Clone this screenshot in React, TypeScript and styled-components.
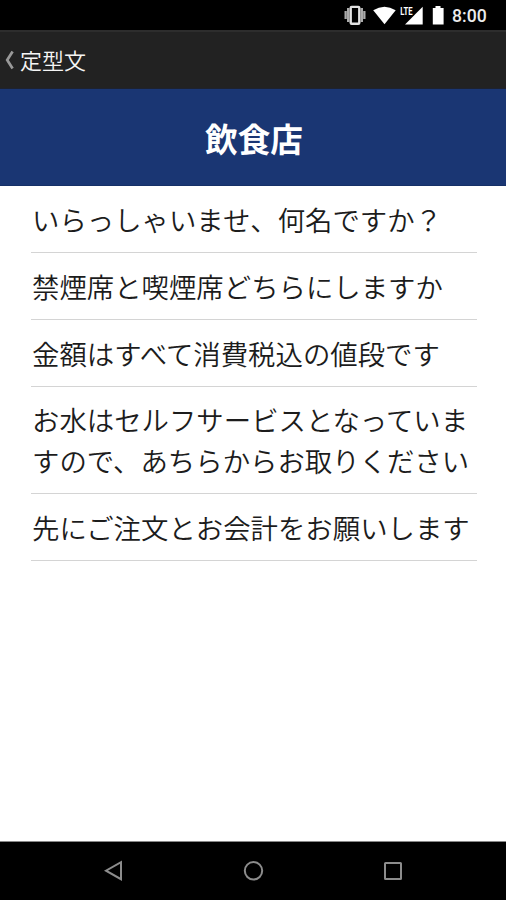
import React from 'react';
import styled, { createGlobalStyle } from 'styled-components';

const GlobalStyle = createGlobalStyle`
  * { box-sizing: border-box; }
  body { margin: 0; background: #fff; }
`;

const Screen = styled.div`
  display: flex;
  flex-direction: column;
  width: 506px;
  height: 900px;
  overflow: hidden;
  background: #fff;
  color: #1c1c1c;
  font-family: 'Noto Sans CJK JP', sans-serif;
`;

const StatusBar = styled.div`
  display: flex;
  flex: none;
  align-items: center;
  justify-content: flex-end;
  height: 30px;
  padding-right: 18px;
  background: #000;
`;

const StatusIcons = styled.svg`
  display: block;
  width: 108px;
  height: 30px;
`;

const Clock = styled.span`
  width: 36px;
  margin-top: 2px;
  color: #ececec;
  font: 500 17.6px/24px Roboto, sans-serif;
  text-align: left;
  white-space: nowrap;
`;

const NavBar = styled.header`
  display: flex;
  flex: none;
  align-items: center;
  height: 59px;
  padding-left: 5px;
  border-top: 2px solid #2d2d2d;
  border-bottom: 1px solid #1d2230;
  background: #222;
`;

const BackIcon = styled.svg`
  width: 9px;
  height: 20px;
  margin-right: 6px;
`;

const NavTitle = styled.span`
  margin-top: -3px;
  color: #f5f5f5;
  font-size: 22px;
  font-weight: 350;
  line-height: 32px;
`;

const Heading = styled.h1`
  flex: none;
  height: 97px;
  margin: 0;
  padding-left: 2px;
  border-bottom: 1px solid #163067;
  background: #1a3673;
  color: #fff;
  font-size: 32.7px;
  font-weight: 700;
  line-height: 98px;
  text-align: center;
`;

const PhraseList = styled.ul`
  flex: 1;
  margin: 0;
  padding: 0 29px 0 31px;
  list-style: none;
`;

const Phrase = styled.li`
  padding: 12.8px 0 12.6px 1px;
  border-bottom: 1px solid #d4d4d4;
  font-family: 'Noto Sans CJK JP DemiLight', 'Noto Sans CJK JP', sans-serif;
  font-size: 27.4px;
  font-weight: 350;
  line-height: 40.5px;
  white-space: pre-line;
`;

const SystemBar = styled.nav`
  display: flex;
  flex: none;
  align-items: center;
  justify-content: space-between;
  height: 59px;
  padding: 0 102px;
  border-top: 1px solid #888;
  background: #000;
`;

const SystemIcon = styled.svg`
  width: 22px;
  height: 22px;
  fill: none;
  stroke: #8c8c8c;
  stroke-width: 2;
`;

const phrases = [
  'いらっしゃいませ、何名ですか？',
  '禁煙席と喫煙席どちらにしますか',
  '金額はすべて消費税込の値段です',
  'お水はセルフサービスとなっていま\nすので、あちらからお取りください',
  '先にご注文とお会計をお願いします',
];

export default function App() {
  return (
    <Screen>
      <GlobalStyle />
      <StatusBar>
        <StatusIcons viewBox="344 0 108 30" fill="#fff">
          <g fill="#aaa">
            <rect x="344.5" y="11" width="2.3" height="8" />
            <rect x="347" y="8" width="2.4" height="14" />
            <rect x="360.6" y="8" width="2.4" height="14" />
            <rect x="363.2" y="11" width="2.3" height="8" />
          </g>
          <rect x="350.7" y="6.9" width="8.6" height="16.8" rx="1" fill="none" stroke="#e2e2e2" strokeWidth="2.4" />
          <path d="M373.2 10.2 Q384.5 3.2 395.7 10.2 L384.5 24.2 Z" />
          <path d="M422.7 6.7 V24.6 H405 Z" />
          <text x="400.3" y="15" fontFamily="Roboto, sans-serif" fontSize="10.5" fontWeight="700" textLength="12.3" lengthAdjust="spacingAndGlyphs" stroke="#000" strokeWidth="2" paintOrder="stroke">LTE</text>
          <path d="M435.5 6 H440.5 V8 H443.6 V24.5 H432.8 V8 H435.5 Z" />
        </StatusIcons>
        <Clock>8:00</Clock>
      </StatusBar>
      <NavBar>
        <BackIcon viewBox="0 0 9 20" fill="none" stroke="#999" strokeWidth="2.7">
          <path d="M7.6 1.5 L2.2 10 L7.6 18.5" />
        </BackIcon>
        <NavTitle>定型文</NavTitle>
      </NavBar>
      <Heading>飲食店</Heading>
      <PhraseList>
        {phrases.map((phrase) => (
          <Phrase key={phrase}>{phrase}</Phrase>
        ))}
      </PhraseList>
      <SystemBar>
        <SystemIcon viewBox="0 0 22 22">
          <path d="M19 2.2 V19.2 L4 10.7 Z" />
        </SystemIcon>
        <SystemIcon viewBox="0 0 22 22">
          <circle cx="11.5" cy="10.8" r="8.7" />
        </SystemIcon>
        <SystemIcon viewBox="0 0 22 22">
          <rect x="3" y="3" width="16" height="16" rx="0.5" />
        </SystemIcon>
      </SystemBar>
    </Screen>
  );
}
